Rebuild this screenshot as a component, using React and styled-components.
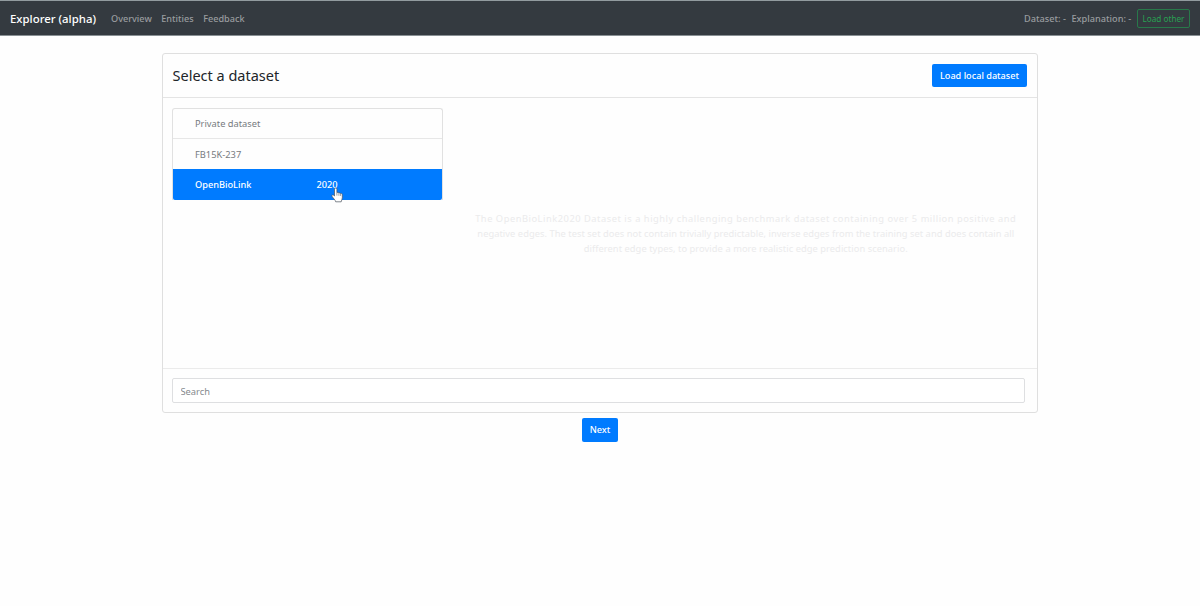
import React from "react"
import styled, { createGlobalStyle } from "styled-components"

const datasets = [
  { name: "Private dataset" },
  { name: "FB15K-237" },
  { name: "OpenBioLink", version: "2020", active: true },
]

const App = () => {
  return (
    <>
      <GlobalStyle />
      <Navbar>
        <Brand>Explorer (alpha)</Brand>
        <NavLinks>
          <NavLink href="#overview">Overview</NavLink>
          <NavLink href="#entities">Entities</NavLink>
          <NavLink href="#feedback">Feedback</NavLink>
        </NavLinks>
        <NavText $width={43}>Dataset: -</NavText>
        <NavText $width={61}>Explanation: -</NavText>
        <OutlineButton>Load other</OutlineButton>
      </Navbar>
      <Content>
        <Card>
          <CardHeader>
            <Title>Select a dataset</Title>
            <Button>Load local dataset</Button>
          </CardHeader>
          <CardBody>
            <List>
              {datasets.map(({ name, version, active }) => (
                <ListItem key={name} $active={active}>
                  <Name>{name}</Name>
                  {version && (
                    <Version>
                      {version}
                      <Pointer />
                    </Version>
                  )}
                </ListItem>
              ))}
            </List>
            <Description>
              <Line $spacing={0.53}>
                The OpenBioLink2020 Dataset is a highly challenging benchmark
                dataset containing over 5 million positive and
              </Line>
              <Line $spacing={0.05}>
                negative edges. The test set does not contain trivially
                predictable, inverse edges from the training set and does
                contain all
              </Line>
              <Line $spacing={0.06}>
                different edge types, to provide a more realistic edge
                prediction scenario.
              </Line>
            </Description>
          </CardBody>
          <CardFooter>
            <SearchInput placeholder="Search" />
          </CardFooter>
        </Card>
        <Button>Next</Button>
      </Content>
    </>
  )
}

const Pointer = () => (
  <PointerIcon viewBox="0 0 12 16">
    <path
      d="M3.5 9V2.2a1.2 1.2 0 0 1 2.4 0v3.6c.3-.6 1.8-.6 2 .4.5-.6 1.6-.3 1.7.5.7-.5 1.7 0 1.7.9v3.2c0 1.6-.9 2.2-1.1 4H4.7c-.3-1.6-2.5-3.7-3.7-5.5-.7-1.1.8-1.9 1.6-1.1z"
      fill="#fff"
      stroke="#4b535d"
      strokeWidth=".7"
      strokeLinejoin="round"
    />
    <path
      d="M5.9 6v2.6M7.9 6.4v2.4M9.6 7v2"
      fill="none"
      stroke="#59616a"
      strokeWidth=".6"
    />
  </PointerIcon>
)

export default App

const GlobalStyle = createGlobalStyle`
  *, *::before, *::after {
    box-sizing: border-box;
  }
  body {
    margin: 0;
    background: #fefefe;
    color: #212529;
    font-family: "Noto Sans", "Open Sans", sans-serif;
    font-size: 9.3px;
    line-height: 15px;
  }
  button, input {
    font: inherit;
  }
`
const Navbar = styled.nav`
  display: flex;
  align-items: center;
  height: 36px;
  padding: 0 10px;
  background: #343a40;
  border-top: 1px solid #929b9f;
  border-bottom: 1px solid #899094;
  white-space: nowrap;
`
const Brand = styled.div`
  width: 101px;
  color: #fff;
  font-size: 11.4px;
  font-weight: 500;
`
const NavLinks = styled.div`
  display: flex;
  flex: 1;
  gap: 9.5px;
`
const NavLink = styled.a`
  color: #999c9f;
  font-size: 9.15px;
  font-weight: 500;
  text-decoration: none;
`
const NavText = styled.span`
  width: ${({ $width }) => $width}px;
  margin-right: 4.5px;
  color: #999c9f;
  font-size: 9.2px;
  font-weight: 500;
`
const OutlineButton = styled.button`
  width: 53px;
  height: 19px;
  padding: 0;
  background: transparent;
  border: 1px solid #28794a;
  border-radius: 2px;
  color: #28a052;
  font-size: 8.2px;
  line-height: 15px;
`
const Content = styled.main`
  display: flex;
  flex-direction: column;
  align-items: center;
  gap: 5px;
  padding-top: 17px;
`
const Card = styled.section`
  width: 876px;
  background: #fefefe;
  border: 1px solid #dfdfdf;
  border-radius: 3px;
`
const CardHeader = styled.header`
  display: flex;
  align-items: center;
  justify-content: space-between;
  height: 44px;
  padding: 0 10px 0 9.5px;
  border-bottom: 1px solid #e4e4e4;
`
const Title = styled.h1`
  margin: 0;
  font-size: 14.5px;
  font-weight: 400;
`
const Button = styled.button`
  height: 23.5px;
  padding: 0 8px;
  background: #007bff;
  border: 0;
  border-radius: 2px;
  color: #fff;
  font-size: 9.15px;
  font-weight: 500;
  white-space: nowrap;
`
const CardBody = styled.div`
  display: flex;
  align-items: center;
  height: 270px;
  padding: 10px 10px 10px 9px;
`
const List = styled.ul`
  align-self: flex-start;
  width: 270.5px;
  margin: 0;
  padding: 0;
  border: 1px solid #e1e1e1;
  border-bottom: 0;
  border-radius: 3px 3px 0 0;
  list-style: none;
`
const ListItem = styled.li`
  display: flex;
  align-items: center;
  height: 30px;
  padding-left: 22px;
  color: #777b7f;

  &:first-child {
    border-bottom: 1px solid #e7e7e7;
  }

  ${({ $active }) =>
    $active &&
    `
    height: 31px;
    margin: 0 -0.5px;
    padding-left: 22.5px;
    background: #007bff;
    border-radius: 0 0 2px 2px;
    color: #fff;
    font-size: 9.2px;
    font-weight: 500;
  `}
`
const Name = styled.span`
  width: 121.5px;
`
const Version = styled.span`
  position: relative;
`
const PointerIcon = styled.svg`
  position: absolute;
  top: 10px;
  left: 14px;
  width: 12px;
  height: 16px;
`
const Description = styled.p`
  flex: 1;
  margin: 1px 0 0 22px;
  color: #ebebec;
  text-align: center;
  white-space: nowrap;
`
const Line = styled.span`
  display: block;
  letter-spacing: ${({ $spacing }) => $spacing}px;
`
const CardFooter = styled.footer`
  height: 44px;
  padding: 9px 12px 10px 9px;
  border-top: 1px solid #ebebeb;
`
const SearchInput = styled.input`
  display: block;
  width: 100%;
  height: 25px;
  padding: 1px 7px 0 7.5px;
  background: #fff;
  border: 1px solid #dedfe1;
  border-radius: 2px;

  &::placeholder {
    color: #85898d;
    opacity: 1;
  }
`
